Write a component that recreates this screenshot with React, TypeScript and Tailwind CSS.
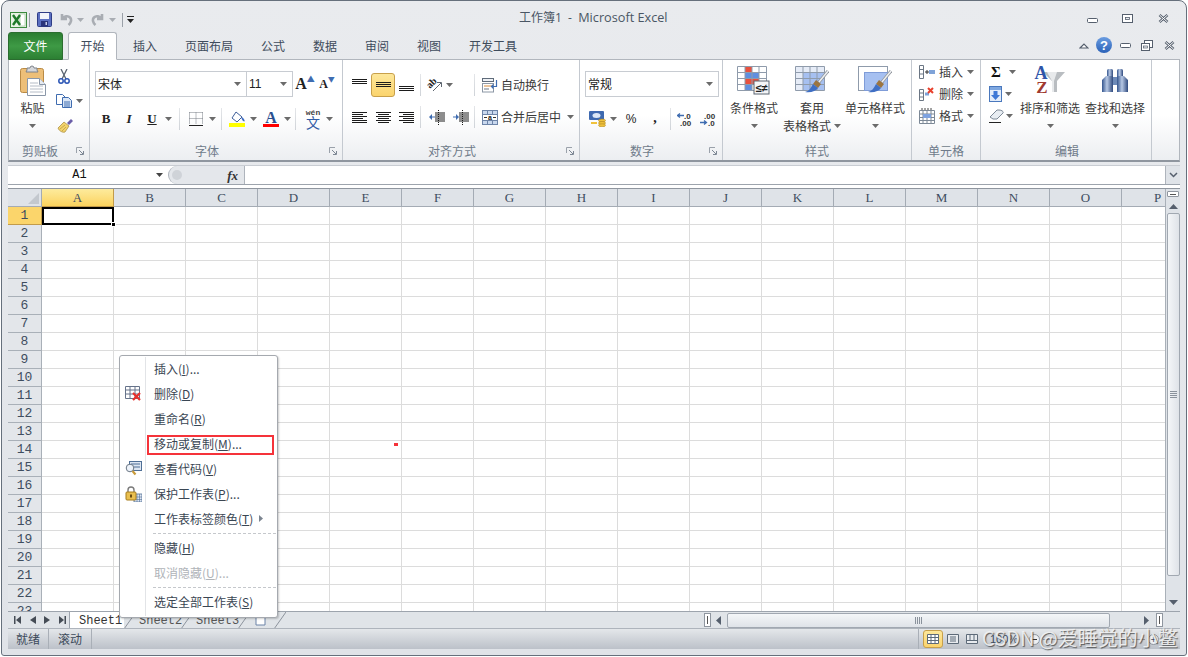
import React from "react";

const CJK = "font-['Noto_Sans_CJK_SC','Noto_Sans',sans-serif]";
const MONO = "font-['Liberation_Mono',monospace]";
const SERIF = "font-['Liberation_Serif',serif]";

const Arrow = ({ c = "#6b6b6b" }: { c?: string }) => (
  <svg width="7" height="4" viewBox="0 0 7 4" className="shrink-0"><path d="M0 0h7L3.500 4z" fill={c} /></svg>
);

const Cell = ({ className = "", children }: { className?: string; children?: React.ReactNode }) => (
  <div className={`flex items-center justify-center shrink-0 h-full ${className}`}>{children}</div>
);

const Sep = () => <div className="w-px h-[22px] bg-gradient-to-b from-[#e4e6e9] to-[#cfd3d8] shrink-0" />;

const Launcher = () => (
  <svg width="9" height="9" viewBox="0 0 9 9" className="shrink-0">
    <path d="M.5 6V.5H6" fill="none" stroke="#9aa1aa" />
    <path d="M3 3l4 4M4 7.500h3.500V4" fill="none" stroke="#7d8794" />
  </svg>
);

const Lines = ({ rows }: { rows: [number, number, number][] }) => (
  <svg width="15" height="14" viewBox="0 0 15 14">
    {rows.map(([y, x, w], i) => <rect key={i} x={x} y={y} width={w} height="1" fill="#1c1c1c" />)}
  </svg>
);

const ExcelIcon = () => (
  <svg width="17" height="16" viewBox="0 0 17 16">
    <rect x=".5" y=".5" width="16" height="15" fill="#e9f3e6" stroke="#3b8a3e" />
    <rect x="10" y="2" width="5" height="12" fill="#fff" stroke="#8cbc8c" strokeWidth=".6" />
    <path d="M3 3l7 10M10 3L3 13" stroke="#1f7a2a" strokeWidth="2.400" />
  </svg>
);
const SaveIcon = () => (
  <svg width="15" height="15" viewBox="0 0 15 15">
    <rect x=".5" y=".5" width="14" height="14" rx="1" fill="#5b6fc0" stroke="#2f3d86" />
    <rect x="3" y="1" width="9" height="6" fill="#f2f4fa" />
    <rect x="4" y="9" width="7" height="5.500" fill="#2a347a" />
    <rect x="8.500" y="10" width="1.500" height="3" fill="#c9d0ec" />
  </svg>
);
const Undo = ({ flip = false }: { flip?: boolean }) => (
  <svg width="13" height="13" viewBox="0 0 13 13" className={flip ? "-scale-x-100" : ""}>
    <path d="M2 1v5h5M2.500 6C4 3 8 2.500 10 4.500 12 6.500 11 10 8.500 12" fill="none" stroke="#a9adb3" strokeWidth="2.600" />
  </svg>
);
const PasteIcon = () => (
  <svg width="28" height="31" viewBox="0 0 28 31">
    <rect x="1.500" y="3.500" width="23" height="24" rx="2" fill="#edbf78" stroke="#b98a45" />
    <path d="M8 5V3h3a2 2 0 014 0h3v2l1 2H7z" fill="#d5d7db" stroke="#7d828a" />
    <path d="M8.500 13.500h12l6 6v11h-18z" fill="#fff" stroke="#8a97a8" />
    <path d="M20.500 13.500v6h6" fill="#e6eaf0" stroke="#8a97a8" />
    <path d="M11 18h8M11 21h13M11 24h13M11 27h13" stroke="#b5bcc6" />
  </svg>
);
const Scissors = () => (
  <svg width="12" height="15" viewBox="0 0 12 15">
    <path d="M3 0l5 10M9 0L4 10" stroke="#5a6470" strokeWidth="1.300" />
    <circle cx="3" cy="12" r="2.200" fill="none" stroke="#2b55b5" strokeWidth="1.500" />
    <circle cx="9" cy="12" r="2.200" fill="none" stroke="#2b55b5" strokeWidth="1.500" />
  </svg>
);
const CopyIcon = () => (
  <svg width="16" height="14" viewBox="0 0 16 14">
    <path d="M.5.500h6l3 3v7H.5z" fill="#fff" stroke="#3f6cb0" />
    <path d="M6.500 3.500h6l3 3v7h-9z" fill="#dbe7f7" stroke="#3f6cb0" />
    <path d="M8 8h6M8 10h6M8 12h6" stroke="#3f6cb0" />
  </svg>
);
const Brush = () => (
  <svg width="17" height="15" viewBox="0 0 17 15">
    <path d="M10 5l4-4 2 2-4 4z" fill="#6b5fa8" />
    <path d="M1 10l6-6 5 4-4 6C6 15 2 13 1 10z" fill="#f2d36b" stroke="#a5873a" strokeWidth=".7" />
    <path d="M3 11l5-4M5 13l4-4" stroke="#b9953f" strokeWidth=".7" />
  </svg>
);
const BorderIcon = () => (
  <svg width="14" height="14" viewBox="0 0 14 14">
    <path d="M.5.500h13M.5.500v12M13.500.5v12M.5 6.500h13M7 .5v12" stroke="#777d85" strokeDasharray="1 1" fill="none" />
    <rect x="0" y="13" width="14" height="1" fill="#222" />
  </svg>
);
const FillIcon = () => (
  <svg width="17" height="16" viewBox="0 0 17 16">
    <path d="M7 1l6 5-5 5-5-4z" fill="#fff" stroke="#3f5f9a" />
    <path d="M13 6c2 2 3 3 2.500 4.500-1.500 0-2.500-2-3-3z" fill="#3d6bc0" />
    <rect x="0" y="12" width="16" height="4" fill="#ffff00" />
  </svg>
);
const ColorA = () => (
  <div className="relative w-[16px] h-[16px] flex flex-col items-center">
    <span className={`${SERIF} font-bold text-[16px] leading-[13px] text-[#2b4f90]`}>A</span>
    <span className="w-full h-[3px] bg-[#ff0000] mt-auto" />
  </div>
);
const Wrap = () => (
  <svg width="16" height="15" viewBox="0 0 16 15">
    <rect x=".5" y=".5" width="11" height="3" fill="#eef1f5" stroke="#5f6b7a" />
    <rect x=".5" y="5.500" width="11" height="8.500" fill="#fff" stroke="#8c97a5" />
    <path d="M2 8h8" stroke="#d58a3c" />
    <path d="M2 11h5" stroke="#6c7684" />
    <path d="M14.500 2v6.500H10" fill="none" stroke="#3f6cb0" strokeWidth="1.200" />
    <path d="M11.500 6.500l-2 2 2 2" fill="none" stroke="#3f6cb0" strokeWidth="1.200" />
  </svg>
);
const Merge = () => (
  <svg width="16" height="15" viewBox="0 0 16 15">
    <rect x=".5" y=".5" width="15" height="14" fill="#c9d8ee" stroke="#6d84a8" />
    <rect x="1" y="5" width="14" height="5" fill="#fff" />
    <path d="M1 4.500h14M1 10.500h14M5.500 1v3M10.500 1v3M5.500 11v3M10.500 11v3" stroke="#6d84a8" />
    <path d="M2 7.500h3M11 7.500h3" stroke="#333" />
    <text x="8" y="9.500" fontSize="7" fontWeight="700" textAnchor="middle" fontFamily="Liberation Sans" fill="#222">a</text>
  </svg>
);
const Currency = () => (
  <svg width="20" height="16" viewBox="0 0 20 16">
    <rect x="1" y="0" width="15" height="9" rx="1" fill="#3e69b0" />
    <ellipse cx="8.500" cy="4.500" rx="4" ry="2.500" fill="#dbe7f7" />
    <ellipse cx="14" cy="9.500" rx="3.500" ry="1.500" fill="#f0c23c" stroke="#a67c1c" strokeWidth=".5" />
    <ellipse cx="14" cy="12" rx="3.500" ry="1.500" fill="#f0c23c" stroke="#a67c1c" strokeWidth=".5" />
    <ellipse cx="14" cy="14.300" rx="3.500" ry="1.500" fill="#f0c23c" stroke="#a67c1c" strokeWidth=".5" />
    <rect x="3" y="11" width="6" height="2" fill="#f0c23c" />
  </svg>
);
const Decimal = ({ more }: { more?: boolean }) => (
  <svg width="17" height="14" viewBox="0 0 17 14" fontFamily="Liberation Sans" fontSize="8" fontWeight="700" fill="#333">
    <text x={more ? 4 : 7} y="6.500">{more ? ".00" : ".0"}</text>
    <text x={more ? 8 : 3} y="13.500">{more ? ".0" : ".00"}</text>
    {more
      ? <path d="M0 10.500h6M4 8.500l2.500 2-2.500 2" fill="none" stroke="#3f6cb0" strokeWidth="1.300" />
      : <path d="M7 3.500H1M3 1.500l-2.500 2 2.500 2" fill="none" stroke="#3f6cb0" strokeWidth="1.300" />}
  </svg>
);
const Indent = ({ dir }: { dir: "l" | "r" }) => (
  <svg width="16" height="15" viewBox="0 0 16 15">
    <path d="M6 3h10M6 5h10M6 7h10M6 9h10M6 11h10" stroke="#1c1c1c" />
    <path d="M9.500 0v15" stroke="#1c1c1c" strokeDasharray="1 1" />
    {dir === "l"
      ? <path d="M6 6.500H3V4L0 7l3 3V7.500h3z" fill="#3f6cb0" />
      : <path d="M0 6.500h3V4l3 3-3 3V7.500H0z" fill="#3f6cb0" />}
  </svg>
);
const Orient = () => (
  <svg width="17" height="16" viewBox="0 0 17 16">
    <text x="0" y="0" transform="translate(3 12) rotate(-45)" fontSize="10" fontWeight="700" fontFamily="Liberation Serif" fill="#222">ab</text>
    <path d="M6 14L14 6M10 5.500h4.500V10" stroke="#5e6670" fill="none" />
  </svg>
);
const Tbl = ({ children }: { children?: React.ReactNode }) => (
  <svg width="34" height="30" viewBox="0 0 34 30">{children}</svg>
);
const GridLines = () => (
  <path d="M.5 1.500h29v24H.5zM.5 7.500h29M.5 13.500h29M.5 19.500h29M8 1.500v24M15 1.500v24M22 1.500v24" fill="none" stroke="#8f9bab" />
);
const Cond = () => (
  <Tbl>
    <rect x=".5" y="1.500" width="29" height="24" fill="#fff" />
    <rect x="8" y="2" width="7" height="6" fill="#e8503e" />
    <rect x="8" y="8" width="14" height="6" fill="#5f8fe0" />
    <rect x="8" y="14" width="14" height="6" fill="#e8503e" />
    <rect x="8" y="20" width="7" height="5" fill="#5f8fe0" />
    <GridLines />
    <rect x="17" y="16" width="15" height="13" fill="#f4f5f7" stroke="#5d6673" />
    <text x="24.500" y="27" fontSize="11" fontWeight="700" textAnchor="middle" fontFamily="Liberation Sans" fill="#222">≤≠</text>
  </Tbl>
);
const BrushOver = () => (
  <g>
    <path d="M33 6L24 17" stroke="#8f959c" strokeWidth="3" />
    <path d="M33 6L24 17" stroke="#eef0f2" strokeWidth="1.500" />
    <path d="M21 15l5 4-3 4-5-4z" fill="#9c7540" />
    <path d="M18 19l5 4c-2 3-7 5-13 4 4-1 6-4 8-8z" fill="#3f6fc4" />
  </g>
);
const FormatTable = () => (
  <Tbl>
    <rect x=".5" y="1.500" width="29" height="24" fill="#e6ecf7" />
    <rect x="8" y="7.500" width="21" height="18" fill="#a6c0f1" />
    <GridLines />
    <BrushOver />
  </Tbl>
);
const CellStyle = () => (
  <Tbl>
    <rect x=".5" y="1.500" width="29" height="24" fill="#fff" stroke="#8f9bab" />
    <rect x="6.500" y="7.500" width="23" height="18" fill="#a6c0f1" stroke="#7f9cd8" />
    <BrushOver />
  </Tbl>
);
const InsIcon = () => (
  <svg width="16" height="14" viewBox="0 0 16 14">
    <path d="M.5.500h4v13h-4zM.5 4.500h4M.5 9h4" fill="#fff" stroke="#6b7684" />
    <path d="M6 7h4M8 5v4" stroke="#333" />
    <rect x="10" y="5" width="6" height="4" fill="#7fa3d8" />
  </svg>
);
const DelIcon = () => (
  <svg width="16" height="14" viewBox="0 0 16 14">
    <path d="M.5 2.500h4v11h-4zM.5 6h4M.5 10h4" fill="#fff" stroke="#6b7684" />
    <path d="M6 7h4" stroke="#7fa3d8" strokeWidth="3" />
    <path d="M9 1l5 5M14 1L9 6" stroke="#e8402c" strokeWidth="2" />
  </svg>
);
const FmtIcon = () => (
  <svg width="16" height="16" viewBox="0 0 16 16">
    <path d="M.5 2.500h15v13H.5zM.5 6h15M.5 9.500h15M.5 12.500h15M4 2.500v13M8 2.500v13M12 2.500v13" fill="#fff" stroke="#7c8896" />
    <rect x="4" y="6" width="8" height="4" fill="#7fa3e0" />
    <path d="M3 0v2M6 0v2M9 0v2M12 0v2" stroke="#444" />
  </svg>
);
const FillDown = () => (
  <svg width="13" height="16" viewBox="0 0 13 16">
    <rect x=".5" y=".5" width="12" height="15" fill="#e3edfa" stroke="#4a78bd" />
    <rect x="1" y="1" width="11" height="3" fill="#7ea7e0" />
    <path d="M4.500 5h4v4H11l-4.500 5L2 9h2.500z" fill="#3e79d6" />
  </svg>
);
const Eraser = () => (
  <svg width="15" height="14" viewBox="0 0 15 14">
    <path d="M1 8l7-7h2c3 0 5 2 4 3l-6 6H4z" fill="#e8edf2" stroke="#7c8896" />
    <path d="M0 13.500h12" stroke="#222" />
  </svg>
);
const SortIcon = () => (
  <svg width="32" height="30" viewBox="0 0 32 30" className="overflow-visible">
    <path d="M9 7h22l-8 9v11h-5V16z" fill="#b9bdc1" />
    <path d="M13 7h10l-3 9v11h-2V16z" fill="#e8eaec" />
    <text x="7" y="14" fontSize="18" fontWeight="700" textAnchor="middle" fontFamily="Liberation Serif" fill="#2f55a8">A</text>
    <text x="8" y="28" fontSize="17" fontWeight="700" textAnchor="middle" fontFamily="Liberation Serif" fill="#a03a30">Z</text>
  </svg>
);
const Binoculars = () => (
  <svg width="28" height="25" viewBox="0 0 28 25">
    <defs>
      <linearGradient id="bin" x1="0" x2="1" y1="0" y2="0">
        <stop offset="0" stopColor="#34558e" /><stop offset=".45" stopColor="#b7c8e4" /><stop offset="1" stopColor="#2f4a7e" />
      </linearGradient>
    </defs>
    <rect x="6" y="1" width="6" height="8" rx="1.500" fill="url(#bin)" />
    <rect x="16" y="1" width="6" height="8" rx="1.500" fill="url(#bin)" />
    <path d="M5 8h7v16H1V12z" fill="url(#bin)" />
    <path d="M23 8h-7v16h11V12z" fill="url(#bin)" />
    <rect x="12" y="9" width="4" height="8" fill="#6d8ab8" />
  </svg>
);
const DelSheet = () => (
  <svg width="17" height="16" viewBox="0 0 17 16">
    <path d="M.5.500h14v12H.5zM.5 4h14M.5 8h14M5 .5v12M10 .5v12" fill="#fff" stroke="#66738a" />
    <path d="M8 7l7 7M15 7l-7 7" stroke="#e8302c" strokeWidth="2.200" />
  </svg>
);
const CodeIcon = () => (
  <svg width="17" height="15" viewBox="0 0 17 15">
    <rect x="4.500" y=".5" width="12" height="9" fill="#dde6f2" stroke="#4f6f96" />
    <path d="M6 3h9M9 6h6" stroke="#4f6f96" />
    <circle cx="5" cy="7" r="3.800" fill="#eef3fa" stroke="#6a7684" />
    <path d="M7.500 10l3 3.500" stroke="#c89a3a" strokeWidth="2.200" />
  </svg>
);
const LockIcon = () => (
  <svg width="17" height="16" viewBox="0 0 17 16">
    <rect x="9" y="8" width="8" height="8" fill="#dfe6f2" stroke="#4f6f96" strokeWidth=".8" />
    <path d="M9 11h8M9 13.500h8M12 8v8M14.500 8v8" stroke="#4f6f96" strokeWidth=".6" />
    <path d="M3 6V4a3 3 0 016 0v2" fill="none" stroke="#7a7a7a" strokeWidth="1.400" />
    <rect x="1" y="6" width="10" height="8" rx="1" fill="#e9bf4f" stroke="#a67c1c" />
    <rect x="5" y="8.500" width="2" height="3" fill="#6b4d12" />
  </svg>
);

const MiniMin = () => <svg width="11" height="5" viewBox="0 0 11 5"><rect x=".5" y=".5" width="10" height="4" rx="1" fill="#fff" stroke="#555f6d" /></svg>;
const MiniMax = () => <svg width="11" height="9" viewBox="0 0 11 9"><rect x=".5" y=".5" width="10" height="8" fill="#fff" stroke="#555f6d" /><rect x="3.500" y="3.500" width="4" height="2" fill="#e8ebef" stroke="#555f6d" strokeWidth=".8" /></svg>;
const MiniClose = () => <svg width="11" height="9" viewBox="0 0 11 9"><path d="M1.500 1l8 7M9.500 1l-8 7" stroke="#555f6d" strokeWidth="2.600" /><path d="M1.500 1l8 7M9.500 1l-8 7" stroke="#fff" strokeWidth="1" /></svg>;
const MiniRestore = () => <svg width="12" height="11" viewBox="0 0 12 11"><rect x="3.500" y=".5" width="8" height="7" fill="#fff" stroke="#555f6d" /><rect x=".5" y="3.500" width="8" height="7" fill="#fff" stroke="#555f6d" /><rect x="2.500" y="6" width="4" height="2" fill="#e8ebef" stroke="#555f6d" strokeWidth=".7" /></svg>;

const Group = ({ className, label, launcher, labelClass = "", children }: { className: string; label: string; launcher?: boolean; labelClass?: string; children?: React.ReactNode }) => (
  <div className={`shrink-0 flex flex-col border-r border-r-[#c4c9d0] ${className}`}>
    <div className="h-[81px] shrink-0 flex flex-col">{children}</div>
    <div className={`h-[20px] shrink-0 flex items-center text-[12px] text-[#6f7b8a] ${labelClass}`}>
      <span className="flex-1 text-center">{label}</span>
      {launcher && <span className="flex items-center pl-[5px] pr-[4px]"><Launcher /></span>}
    </div>
  </div>
);

const Select = ({ className, text, textClass = "" }: { className: string; text: string; textClass?: string }) => (
  <div className={`h-[26px] bg-white border border-[#c8ccd2] flex items-center justify-between pl-[2px] pr-[5px] shrink-0 ${className}`}>
    <span className={`text-[12px] text-[#222] ${textClass}`}>{text}</span>
    <Arrow />
  </div>
);

const BigBtn = ({ className, icon, lines }: { className: string; icon: React.ReactNode; lines: string[] }) => (
  <div className={`shrink-0 flex flex-col items-center ${className}`}>
    <div className="h-[30px] flex items-center justify-center mt-[5px]">{icon}</div>
    <div className="h-[18px] mt-[4px] flex items-center justify-center text-[12px] leading-none text-[#3b3b3b] whitespace-nowrap">{lines[0]}</div>
    {lines[1]
      ? <div className="h-[18px] flex items-center justify-center gap-[3px] text-[12px] leading-none text-[#3b3b3b] whitespace-nowrap">{lines[1]}<Arrow /></div>
      : <div className="h-[18px] flex items-center justify-center"><Arrow /></div>}
  </div>
);

const Ribbon = () => (
  <div className="h-[103px] shrink-0 flex border border-[#b1b6bd] border-b-[#8f969f] border-b-2 bg-gradient-to-b from-white from-55% to-[#eceef1] overflow-hidden">
    <Group className="w-[81px]" label="剪贴板" launcher>
      <div className="flex h-full">
        <BigBtn className="w-[47px]" icon={<PasteIcon />} lines={["粘贴"]} />
        <div className="flex flex-col pt-[5px] w-[32px]">
          <Cell className="!h-[23px] w-[14px] ml-[1px]"><Scissors /></Cell>
          <Cell className="!h-[25px] gap-[4px] justify-start"><CopyIcon /><Arrow /></Cell>
          <Cell className="!h-[24px] w-[18px]"><Brush /></Cell>
        </div>
      </div>
    </Group>
    <Group className="w-[253px]" label="字体" launcher>
      <div className="flex items-center h-[26px] mt-[11px] pl-[5px] shrink-0">
        <Select className="w-[152px]" text="宋体" />
        <Select className="w-[47px] -ml-px" text="11" textClass="font-['Liberation_Sans',sans-serif]" />
        <Cell className="w-[22px] ml-[1px]">
          <span className={`${SERIF} font-bold text-[16px] text-[#222] leading-none`}>A</span>
          <span className="text-[8px] text-[#3f6cb0] -mt-[10px] leading-none">▲</span>
        </Cell>
        <Cell className="w-[22px]">
          <span className={`${SERIF} font-bold text-[12px] text-[#222] leading-none`}>A</span>
          <span className="text-[7px] text-[#3f6cb0] -mt-[9px] leading-none">▼</span>
        </Cell>
      </div>
      <div className={`flex items-center h-[24px] mt-[10px] pl-[5px] shrink-0 ${SERIF} text-[#222]`}>
        <Cell className="w-[22px] font-bold text-[13px]">B</Cell>
        <Cell className="w-[24px] italic font-bold text-[13px]">I</Cell>
        <Cell className="w-[22px] font-bold text-[13px] underline">U</Cell>
        <Cell className="w-[11px]"><Arrow /></Cell>
        <Cell className="w-[10px]"><Sep /></Cell>
        <Cell className="w-[24px]"><BorderIcon /></Cell>
        <Cell className="w-[9px]"><Arrow /></Cell>
        <Cell className="w-[8px]"><Sep /></Cell>
        <Cell className="w-[24px]"><FillIcon /></Cell>
        <Cell className="w-[8px]"><Arrow /></Cell>
        <Cell className="w-[24px] ml-[2px]"><ColorA /></Cell>
        <Cell className="w-[8px]"><Arrow /></Cell>
        <Cell className="w-[9px]"><Sep /></Cell>
        <Cell className="w-[26px] flex-col leading-none text-[#444]">
          <span className={`text-[8px] font-bold leading-[7px] ${MONO}`}>wén</span>
          <span className={`text-[14px] leading-[13px] text-[#2f5ba5] ${CJK}`}>文</span>
        </Cell>
        <Cell className="w-[7px]"><Arrow /></Cell>
      </div>
    </Group>
    <Group className="w-[237px]" label="对齐方式" launcher>
      <div className="flex items-center h-[24px] mt-[13px] pl-[5px] shrink-0">
        <Cell className="w-[23px]"><Lines rows={[[1, 0, 15], [3, 0, 15], [5, 0, 15]]} /></Cell>
        <Cell className="w-[24px] border border-[#c8a04a] rounded-[3px] bg-gradient-to-b from-[#fde79a] to-[#fbd46d]"><Lines rows={[[4, 0, 15], [6, 0, 15], [8, 0, 15]]} /></Cell>
        <Cell className="w-[23px]"><Lines rows={[[8, 0, 15], [10, 0, 15], [12, 0, 15]]} /></Cell>
        <Cell className="w-[2px]" />
        <Sep />
        <Cell className="w-[38px] gap-[2px]"><Orient /><Arrow /></Cell>
        <Cell className="w-[15px]" />
        <Sep />
        <Cell className="w-[7px]" />
        <div className="flex items-center gap-[3px] text-[12px] text-[#3b3b3b] whitespace-nowrap"><Wrap />自动换行</div>
      </div>
      <div className="flex items-center h-[24px] mt-[8px] pl-[5px] shrink-0">
        <Cell className="w-[23px]"><Lines rows={[[2, 0, 15], [4, 0, 11], [6, 0, 15], [8, 0, 11], [10, 0, 15], [12, 0, 15]]} /></Cell>
        <Cell className="w-[24px]"><Lines rows={[[2, 0, 15], [4, 2, 11], [6, 0, 15], [8, 2, 11], [10, 0, 15], [12, 2, 11]]} /></Cell>
        <Cell className="w-[23px]"><Lines rows={[[2, 0, 15], [4, 4, 11], [6, 0, 15], [8, 4, 11], [10, 0, 15], [12, 4, 11]]} /></Cell>
        <Cell className="w-[2px]" />
        <Sep />
        <Cell className="w-[28px] pl-[4px]"><Indent dir="l" /></Cell>
        <Cell className="w-[23px]"><Indent dir="r" /></Cell>
        <Cell className="w-[2px]" />
        <Sep />
        <Cell className="w-[7px]" />
        <div className="flex items-center gap-[3px] text-[12px] text-[#3b3b3b] whitespace-nowrap"><Merge />合并后居中<span className="ml-[3px]"><Arrow /></span></div>
      </div>
    </Group>
    <Group className="w-[143px]" label="数字" launcher>
      <div className="flex h-[26px] mt-[11px] pl-[5px] shrink-0"><Select className="w-[134px]" text="常规" /></div>
      <div className="flex items-center h-[24px] mt-[10px] pl-[8px] shrink-0 text-[#222]">
        <Cell className="w-[20px]"><Currency /></Cell>
        <Cell className="w-[10px]"><Arrow /></Cell>
        <Cell className="w-[26px] text-[12px] font-['Liberation_Sans',sans-serif]">%</Cell>
        <Cell className={`w-[22px] text-[14px] ${SERIF} font-bold pb-[4px]`}>,</Cell>
        <Cell className="w-[8px]"><Sep /></Cell>
        <Cell className="w-[23px]"><Decimal /></Cell>
        <Cell className="w-[23px]"><Decimal more /></Cell>
      </div>
    </Group>
    <Group className="w-[189px]" label="样式">
      <div className="flex pl-[2px]">
        <BigBtn className="w-[58px]" icon={<Cond />} lines={["条件格式"]} />
        <BigBtn className="w-[58px]" icon={<FormatTable />} lines={["套用", "表格格式"]} />
        <BigBtn className="w-[68px]" icon={<CellStyle />} lines={["单元格样式"]} />
      </div>
    </Group>
    <Group className="w-[69px]" label="单元格">
      <div className="flex flex-col pl-[7px] text-[12px] text-[#3b3b3b]">
        <div className="h-[22px] mt-[1px] flex items-center"><InsIcon /><span className="ml-[4px] mr-[4px]">插入</span><Arrow /></div>
        <div className="h-[22px] flex items-center"><DelIcon /><span className="ml-[4px] mr-[4px]">删除</span><Arrow /></div>
        <div className="h-[22px] flex items-center"><FmtIcon /><span className="ml-[4px] mr-[4px]">格式</span><Arrow /></div>
      </div>
    </Group>
    <Group className="w-[171px]" label="编辑" labelClass="pl-[2px]">
      <div className="flex">
        <div className="flex flex-col pl-[8px] pt-[1px] w-[36px] shrink-0">
          <div className="h-[22px] flex items-center gap-[6px]"><span className={`${SERIF} font-bold text-[15px] text-[#111] w-[14px] text-center`}>Σ</span><Arrow /></div>
          <div className="h-[22px] flex items-center gap-[3px]"><FillDown /><Arrow /></div>
          <div className="h-[22px] flex items-center gap-[2px]"><Eraser /><Arrow /></div>
        </div>
        <BigBtn className="w-[66px]" icon={<SortIcon />} lines={["排序和筛选"]} />
        <BigBtn className="w-[64px]" icon={<Binoculars />} lines={["查找和选择"]} />
      </div>
    </Group>
  </div>
);

const COLS = "ABCDEFGHIJKLMNOP".split("");
const ROWS = Array.from({ length: 23 }, (_, i) => i + 1);

const Sheet = () => (
  <div className="flex-1 min-w-0 overflow-hidden bg-white">
    <div className={`flex h-[18px] ${SERIF} text-[13px] text-[#3e4d5f]`}>
      <div className="w-[34px] shrink-0 bg-[#dfe3e8] border-r border-b border-[#a4abb4] flex items-end justify-end p-[2px]">
        <svg width="11" height="11" viewBox="0 0 11 11"><path d="M11 0v11H0z" fill="#c3c8ce" /></svg>
      </div>
      {COLS.map((c, i) => (
        <div key={c} className={`w-[72px] shrink-0 flex items-center justify-center border-r border-b ${i === 0 ? "bg-gradient-to-b from-[#fdeb9c] to-[#fbd35d] border-[#c29b4a]" : "bg-[#dfe3e8] border-[#a4abb4]"}`}>{c}</div>
      ))}
    </div>
    {ROWS.map((r) => (
      <div key={r} className="flex h-[18px]">
        <div className={`w-[34px] shrink-0 flex items-center justify-center border-r border-b ${MONO} text-[13px] text-[#3e4d5f] ${r === 1 ? "bg-[#fbd56b] border-[#c29b4a]" : "bg-[#e3e6ea] border-[#a9b0b8]"}`}>{r}</div>
        {COLS.map((c) => <div key={c} className="w-[72px] shrink-0 border-r border-b border-[#dcdcdc]" />)}
      </div>
    ))}
  </div>
);

const VScroll = () => (
  <div className="w-[15px] shrink-0 bg-[#dfe3e8] border-l border-[#a9b0b8] flex flex-col items-center">
    <div className="w-[12px] h-[6px] mt-[2px] border border-[#8f969f] bg-white rounded-[1px] flex items-center justify-center"><div className="w-[6px] h-px bg-[#555]" /></div>
    <div className="h-[14px] mt-[2px] flex items-center justify-center">
      <svg width="9" height="5" viewBox="0 0 9 5"><path d="M4.500 0L9 5H0z" fill="#555f6d" /></svg>
    </div>
    <div className="w-[13px] h-[363px] border border-[#a1a8b1] rounded-[2px] bg-gradient-to-r from-[#f4f6f8] to-[#dfe3e8] flex flex-col items-center justify-center gap-px">
      <div className="w-[7px] h-px bg-[#8a929c]" /><div className="w-[7px] h-px bg-[#8a929c]" /><div className="w-[7px] h-px bg-[#8a929c]" /><div className="w-[7px] h-px bg-[#8a929c]" />
    </div>
    <div className="flex-1" />
    <div className="h-[14px] mb-[2px] flex items-center justify-center">
      <svg width="9" height="5" viewBox="0 0 9 5"><path d="M4.500 5L9 0H0z" fill="#555f6d" /></svg>
    </div>
  </div>
);

const Slant = () => (
  <svg width="12" height="17" viewBox="0 0 12 17" className="shrink-0"><path d="M12 0L0 17" stroke="#8d949d" /></svg>
);

const NavGlyph = ({ d }: { d: string }) => <Cell className="w-[15px]"><svg width="7" height="8" viewBox="0 0 7 8"><path d={d} fill="#454c55" /></svg></Cell>;

const TabBar = () => (
  <div className="h-[17px] shrink-0 flex items-stretch bg-[#e0e4e8] border-t border-[#9da4ad]">
    <div className="w-[62px] shrink-0 flex items-center border-r border-[#9da4ad] pl-[2px]">
      <NavGlyph d="M0 0h1.500v8H0zM7 0v8L2 4z" />
      <NavGlyph d="M7 0v8L1 4z" />
      <NavGlyph d="M0 0v8l6-4z" />
      <NavGlyph d="M5.500 0H7v8H5.500zM0 0v8l5-4z" />
    </div>
    <div className={`flex items-stretch ${MONO} text-[12px] text-[#333] leading-none`}>
      <div className="w-[54px] bg-white flex items-center pl-[9px] pt-[1px] shrink-0">Sheet1</div>
      <Slant />
      <div className="w-[45px] flex items-center pl-[3px] pt-[1px] shrink-0 text-[#555]">Sheet2</div>
      <Slant />
      <div className="w-[45px] flex items-center pl-[3px] pt-[1px] shrink-0 text-[#555]">Sheet3</div>
      <Slant />
      <div className="w-[24px] flex items-center pl-[3px] shrink-0">
        <svg width="15" height="12" viewBox="0 0 15 12"><path d="M3 2h9v9H3z" fill="#fff" stroke="#6d84a8" /><path d="M3 1l2 2M1 3l2 0" stroke="#d8a22c" strokeWidth="1.500" /></svg>
      </div>
      <Slant />
    </div>
    <div className="flex-1" />
    <div className="w-[478px] shrink-0 flex items-center">
      <div className="w-[7px] h-[14px] border border-[#8f969f] bg-white ml-[2px] shrink-0 flex items-center justify-center"><div className="w-px h-[8px] bg-[#555]" /></div>
      <div className="w-[14px] flex justify-center shrink-0"><svg width="5" height="9" viewBox="0 0 5 9"><path d="M5 0v9L0 4.500z" fill="#555f6d" /></svg></div>
      <div className="w-[383px] h-[15px] ml-[2px] border border-[#a1a8b1] rounded-[2px] bg-gradient-to-b from-[#f4f6f8] to-[#dfe3e8] flex items-center justify-center gap-px shrink-0">
        <div className="w-px h-[7px] bg-[#8a929c]" /><div className="w-px h-[7px] bg-[#8a929c]" /><div className="w-px h-[7px] bg-[#8a929c]" /><div className="w-px h-[7px] bg-[#8a929c]" />
      </div>
      <div className="flex-1 flex justify-end pr-[7px]"><svg width="5" height="9" viewBox="0 0 5 9"><path d="M0 0v9l5-4.500z" fill="#555f6d" /></svg></div>
      <div className="w-[7px] h-[14px] border border-[#8f969f] bg-white mr-[17px] shrink-0 flex items-center justify-center"><div className="w-px h-[8px] bg-[#555]" /></div>
    </div>
  </div>
);

const StatusBar = () => (
  <div className="h-[21px] shrink-0 flex items-center bg-gradient-to-b from-[#e4e7ea] to-[#bcc1c9] text-[12px] text-[#3c4a5a] border-t border-[#aeb4bc]">
    <div className="w-[41px] pl-[8px] shrink-0 h-full flex items-center border-r border-[#a9afb7]">就绪</div>
    <div className="w-[43px] pl-[9px] shrink-0 h-full flex items-center border-r border-[#a9afb7]">滚动</div>
    <div className="flex-1" />
    <div className="h-full border-l border-[#a9afb7] flex items-center pl-[4px] w-[262px] shrink-0">
      <div className="w-[20px] h-[18px] shrink-0 flex items-center justify-center border border-[#c8a04a] rounded-[3px] bg-gradient-to-b from-[#fde79a] to-[#fbd46d]">
        <svg width="12" height="10" viewBox="0 0 12 10"><path d="M.5.500h11v9H.5zM.5 3.500h11M.5 6.500h11M4 .5v9M8 .5v9" fill="#fff" stroke="#5d6a78" /></svg>
      </div>
      <Cell className="w-[19px]"><svg width="12" height="10" viewBox="0 0 12 10"><path d="M.5.500h11v9H.5z" fill="#e8ebef" stroke="#5d6a78" /><path d="M3 3h6M3 5h6M3 7h6" stroke="#5d6a78" /></svg></Cell>
      <Cell className="w-[19px]"><svg width="12" height="10" viewBox="0 0 12 10"><path d="M.5.500h11v9H.5zM4 .5v6M8 .5v6M.5 6.500h11" fill="#e8ebef" stroke="#5d6a78" /></svg></Cell>
      <span className="ml-[9px] w-[30px] font-['Liberation_Sans',sans-serif] text-[11px] shrink-0">100%</span>
      <span className="ml-[9px] w-[11px] h-[11px] rounded-full bg-[#eef0f3] border border-[#8f969f] flex items-center justify-center shrink-0"><span className="w-[5px] h-px bg-[#333]" /></span>
      <div className="flex-1 h-px bg-[#8f969f] mx-[3px]" />
      <span className="mr-[21px] w-[11px] h-[11px] rounded-full bg-[#eef0f3] border border-[#8f969f] flex items-center justify-center shrink-0 text-[10px] leading-none">+</span>
    </div>
  </div>
);

const Mn = ({ t, k, after = "", cls = "" }: { t: string; k: string; after?: string; cls?: string }) => (
  <span className={`whitespace-nowrap ${cls}`}>{t}(<span className="underline">{k}</span>){after}</span>
);

const MenuItem = ({ icon, children }: { icon?: React.ReactNode; children: React.ReactNode }) => (
  <div className="h-[25px] flex items-center shrink-0">
    <div className="w-[25px] shrink-0 flex items-center justify-center pl-[2px]">{icon}</div>
    <div className="pl-[9px] flex-1 flex items-center">{children}</div>
  </div>
);

const MenuSep = () => (
  <div className="h-[4px] shrink-0 pl-[33px] pr-[1px] flex items-center"><div className="w-full border-t border-dashed border-[#c5c8cc]" /></div>
);

const ContextMenu = () => (
  <div className="absolute left-[119px] top-[355px] w-[159px] h-[263px] bg-white border border-[#a5a9af] rounded-[3px] shadow-[1px_1px_2px_rgba(0,0,0,0.2)] text-[12px] text-[#3a4653] flex flex-col">
    <div className="absolute left-[25px] top-[1px] bottom-[1px] w-px bg-[#e2e4e7]" />
    <MenuItem><Mn t="插入" k="I" after="..." /></MenuItem>
    <MenuItem icon={<DelSheet />}><Mn t="删除" k="D" /></MenuItem>
    <MenuItem><Mn t="重命名" k="R" /></MenuItem>
    <MenuItem><Mn t="移动或复制" k="M" after="..." /></MenuItem>
    <MenuItem icon={<CodeIcon />}><Mn t="查看代码" k="V" /></MenuItem>
    <MenuItem icon={<LockIcon />}><Mn t="保护工作表" k="P" after="..." /></MenuItem>
    <MenuItem>
      <Mn t="工作表标签颜色" k="T" />
      <svg width="4" height="7" viewBox="0 0 4 7" className="ml-[6px]"><path d="M0 0v7l4-3.500z" fill="#7b8490" /></svg>
    </MenuItem>
    <MenuSep />
    <MenuItem><Mn t="隐藏" k="H" /></MenuItem>
    <MenuItem><Mn t="取消隐藏" k="U" after="..." cls="text-[#b0b4b9]" /></MenuItem>
    <MenuSep />
    <MenuItem><Mn t="选定全部工作表" k="S" /></MenuItem>
    <div className="absolute left-[27px] top-[79px] w-[127px] h-[20px] border-2 border-[#f5333a]" />
  </div>
);

export default function App() {
  return (
    <div className={`relative w-[1188px] h-[657px] bg-white overflow-hidden pl-px ${CJK}`}>
      <div className="w-[1186px] h-[656px] rounded-t-[8px] rounded-b-[3px] border border-[#66707c] bg-gradient-to-b from-[#e9ebee] to-[#e0e3e8] px-[6px] flex flex-col">
        <div className="h-[31px] shrink-0 flex items-center pt-[6px] relative">
          <Cell className="w-[19px] pl-[2px]"><ExcelIcon /></Cell>
          <Cell className="w-[5px]"><div className="w-px h-[14px] bg-[#9aa0a8]" /></Cell>
          <Cell className="w-[15px] ml-[5px]"><SaveIcon /></Cell>
          <Cell className="w-[14px] ml-[7px]"><Undo /></Cell>
          <Cell className="w-[14px]"><Arrow c="#a9adb3" /></Cell>
          <Cell className="w-[14px] ml-[3px]"><Undo flip /></Cell>
          <Cell className="w-[16px]"><Arrow c="#a9adb3" /></Cell>
          <Cell className="w-[5px]"><div className="w-px h-[14px] bg-[#9aa0a8]" /></Cell>
          <Cell className="w-[10px]"><svg width="7" height="7" viewBox="0 0 7 7"><path d="M0 0h7v1H0zM0 3h7L3.500 7z" fill="#222" /></svg></Cell>
          <div className="absolute left-[511px] top-[7px] text-[12px] leading-[18px] text-[#4a5664] whitespace-pre font-['Open_Sans','Noto_Sans_CJK_SC',sans-serif]">工作簿1  -  <span className="text-[12.7px]">Microsoft Excel</span></div>
          <div className="flex-1" />
          <div className="flex items-center h-full pr-[11px]">
            <Cell className="w-[11px] pt-[1px]"><MiniMin /></Cell>
            <Cell className="w-[11px] ml-[24px] pb-[3px]"><MiniMax /></Cell>
            <Cell className="w-[11px] ml-[25px] pb-[3px]"><MiniClose /></Cell>
          </div>
        </div>
        <div className="h-[28px] shrink-0 flex items-end text-[12px] text-[#3f4c5c] relative z-10 -mb-px">
          <div className="w-[55px] h-[28px] rounded-t-[3px] bg-gradient-to-b from-[#2a7d31] via-[#3e9a45] to-[#2c8033] border border-[#2b6d30] text-white flex items-center justify-center shrink-0">文件</div>
          <div className="w-[49px] h-[28px] ml-[5px] rounded-t-[3px] bg-white border border-[#b1b6bd] border-b-white flex items-center justify-center shrink-0">开始</div>
          <div className="flex items-center h-[28px] pl-[2px]">
            {["插入", "页面布局", "公式", "数据", "审阅", "视图", "开发工具"].map((t) => (
              <div key={t} className="px-[14px] shrink-0">{t}</div>
            ))}
          </div>
          <div className="flex-1" />
          <div className="flex items-center h-[28px] pb-[2px] pr-[5px]">
            <svg width="10" height="7" viewBox="0 0 10 7"><path d="M1 6l4-4 4 4z" fill="#fff" stroke="#555f6d" strokeWidth="1.200" /></svg>
            <div className="w-[16px] h-[16px] ml-[7px] rounded-full bg-gradient-to-b from-[#6a9ce0] to-[#2a62b8] text-white font-bold text-[13px] leading-none flex items-center justify-center font-['Liberation_Sans',sans-serif]">?</div>
            <div className="ml-[8px]"><MiniMin /></div>
            <div className="ml-[10px]"><MiniRestore /></div>
            <div className="ml-[11px]"><MiniClose /></div>
          </div>
        </div>
        <Ribbon />
        <div className="h-[3px] shrink-0" />
        <div className="h-[20px] shrink-0 flex bg-white border-b border-[#9da4ad] border-t border-t-[#c9cdd3]">
          <div className="w-[160px] shrink-0 flex items-center pl-[1px] text-[12px]">
            <span className={`w-[147px] pr-[6px] text-center ${MONO} text-[#111]`}>A1</span>
            <Arrow c="#444" />
          </div>
          <div className="w-[77px] shrink-0 flex items-center rounded-l-full border-l border-[#aeb4bc] bg-[#e4e7eb] border-r pr-[6px] justify-end">
            <div className="w-[10px] h-[10px] rounded-full bg-[#cfd3d8] mr-auto ml-[3px]" />
            <span className={`${SERIF} italic font-bold text-[13px] leading-none text-[#333]`}>fx</span>
          </div>
          <div className="flex-1" />
          <div className="w-[15px] shrink-0 bg-[#dfe3e8] border-l border-[#aeb4bc] flex items-center justify-center">
            <svg width="9" height="6" viewBox="0 0 9 6"><path d="M1 1l3.500 3.500L8 1" fill="none" stroke="#555f6d" strokeWidth="1.500" /></svg>
          </div>
        </div>
        <div className="h-[3px] shrink-0 bg-white" />
        <div className="h-[423px] shrink-0 flex border-t border-[#8f969f] overflow-hidden">
          <Sheet />
          <VScroll />
        </div>
        <TabBar />
        <StatusBar />
      </div>
      <div className="absolute left-[42px] top-[207px] w-[72px] h-[18px] border-2 border-black" />
      <div className="absolute left-[111px] top-[222px] w-[5px] h-[5px] bg-black border border-white" />
      <div className="absolute left-[394px] top-[443px] w-[4px] h-[3px] bg-[#f5333a]" />
      <ContextMenu />
      <div className="absolute left-[982px] top-[625px] text-[20px] leading-[26px] text-[#f4f4f4]/90 whitespace-nowrap [text-shadow:1px_1px_1px_rgba(50,50,50,0.75)] pointer-events-none">CSDN @爱睡觉的小鳖</div>
    </div>
  );
}
